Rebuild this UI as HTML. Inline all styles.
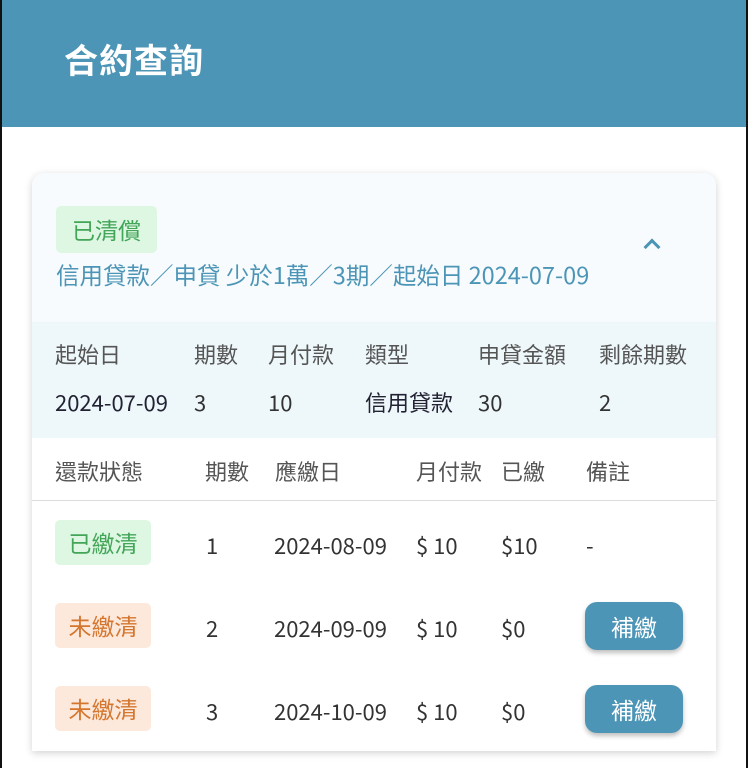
<!DOCTYPE html>
<html><head><meta charset="utf-8"><style>
*{margin:0;padding:0;box-sizing:border-box}
body{width:748px;height:768px;background:#fff;font-family:"Noto Sans CJK TC","Liberation Sans",sans-serif;position:relative;overflow:hidden}
.bl{position:absolute;top:0;width:2px;height:768px;background:#111;z-index:5}
.hdr{position:absolute;left:0;top:0;width:748px;height:127px;background:#4c95b6}
.hdr h1{position:absolute;left:64px;top:36px;color:#fff;font-size:34px;font-weight:bold;letter-spacing:1px;line-height:46px}
.card{position:absolute;left:32px;top:173px;width:684px;height:578px;background:#fff;border-radius:12px 12px 0 0;box-shadow:0 2px 8px rgba(0,0,0,.18);overflow:hidden}
.top{position:absolute;left:0;top:0;width:684px;height:149px;background:#f7fbfd}
.tag{position:absolute;border-radius:5px;font-size:23px;text-align:center;line-height:46px}
.g{background:#ddf7e3;color:#43a558}
.o{background:#fde8dc;color:#d4762e}
.sub{position:absolute;left:24px;top:86px;font-size:23.5px;color:#4c95b6;line-height:30px;white-space:nowrap}
.chev{position:absolute;left:614px;top:68px;width:12px;height:12px;border-left:3px solid #4c95b6;border-top:3px solid #4c95b6;transform:rotate(45deg)}
.det{position:absolute;left:0;top:149px;width:684px;height:116px;background:#eef8fa}
.t{position:absolute;font-size:22px;color:#333;white-space:nowrap;line-height:26px}
.h{color:#555}
.line{position:absolute;left:0;top:327px;width:684px;height:1px;background:#ddd}
.btn{position:absolute;left:553px;width:98px;height:48px;background:#4c95b6;color:#fff;border-radius:12px;font-size:23px;text-align:center;line-height:48px;box-shadow:0 3px 5px rgba(0,0,0,.25)}
</style></head><body>
<div class="bl" style="left:0"></div><div class="bl" style="left:746px"></div>
<div class="hdr"><h1>合約查詢</h1></div>
<div class="card">
<div class="top">
<div class="tag g" style="left:24px;top:33px;width:101px;height:47px">已清償</div>
<div class="sub">信用貸款／申貸 少於1萬／3期／起始日 2024-07-09</div>
<div class="chev"></div>
</div>
<div class="det">
<div class="t h" style="left:23px;top:19px">起始日</div>
<div class="t h" style="left:162px;top:19px">期數</div>
<div class="t h" style="left:236px;top:19px">月付款</div>
<div class="t h" style="left:333px;top:19px">類型</div>
<div class="t h" style="left:446px;top:19px">申貸金額</div>
<div class="t h" style="left:567px;top:19px">剩餘期數</div>
<div class="t" style="left:23px;top:67px;color:#223">2024-07-09</div>
<div class="t" style="left:162px;top:67px">3</div>
<div class="t" style="left:236px;top:67px">10</div>
<div class="t" style="left:333px;top:67px;color:#223">信用貸款</div>
<div class="t" style="left:446px;top:67px">30</div>
<div class="t" style="left:567px;top:67px">2</div>
</div>
<div class="t h" style="left:23px;top:285px">還款狀態</div>
<div class="t h" style="left:173px;top:285px">期數</div>
<div class="t h" style="left:243px;top:285px">應繳日</div>
<div class="t h" style="left:384px;top:285px">月付款</div>
<div class="t h" style="left:469px;top:285px">已繳</div>
<div class="t h" style="left:554px;top:285px">備註</div>
<div class="line"></div>

<div class="tag g" style="left:23px;top:347px;width:96px;height:45px;line-height:45px">已繳清</div>
<div class="t" style="left:174px;top:359px">1</div>
<div class="t" style="left:242px;top:359px">2024-08-09</div>
<div class="t" style="left:384px;top:359px">$ 10</div>
<div class="t" style="left:469px;top:359px">$10</div>
<div class="t" style="left:554px;top:359px">-</div>

<div class="tag o" style="left:23px;top:430px;width:96px;height:45px;line-height:45px">未繳清</div>
<div class="t" style="left:174px;top:442px">2</div>
<div class="t" style="left:242px;top:442px">2024-09-09</div>
<div class="t" style="left:384px;top:442px">$ 10</div>
<div class="t" style="left:469px;top:442px">$0</div>
<div class="btn" style="top:429px">補繳</div>

<div class="tag o" style="left:23px;top:513px;width:96px;height:45px;line-height:45px">未繳清</div>
<div class="t" style="left:174px;top:525px">3</div>
<div class="t" style="left:242px;top:525px">2024-10-09</div>
<div class="t" style="left:384px;top:525px">$ 10</div>
<div class="t" style="left:469px;top:525px">$0</div>
<div class="btn" style="top:512px">補繳</div>
</div>
</body></html>
